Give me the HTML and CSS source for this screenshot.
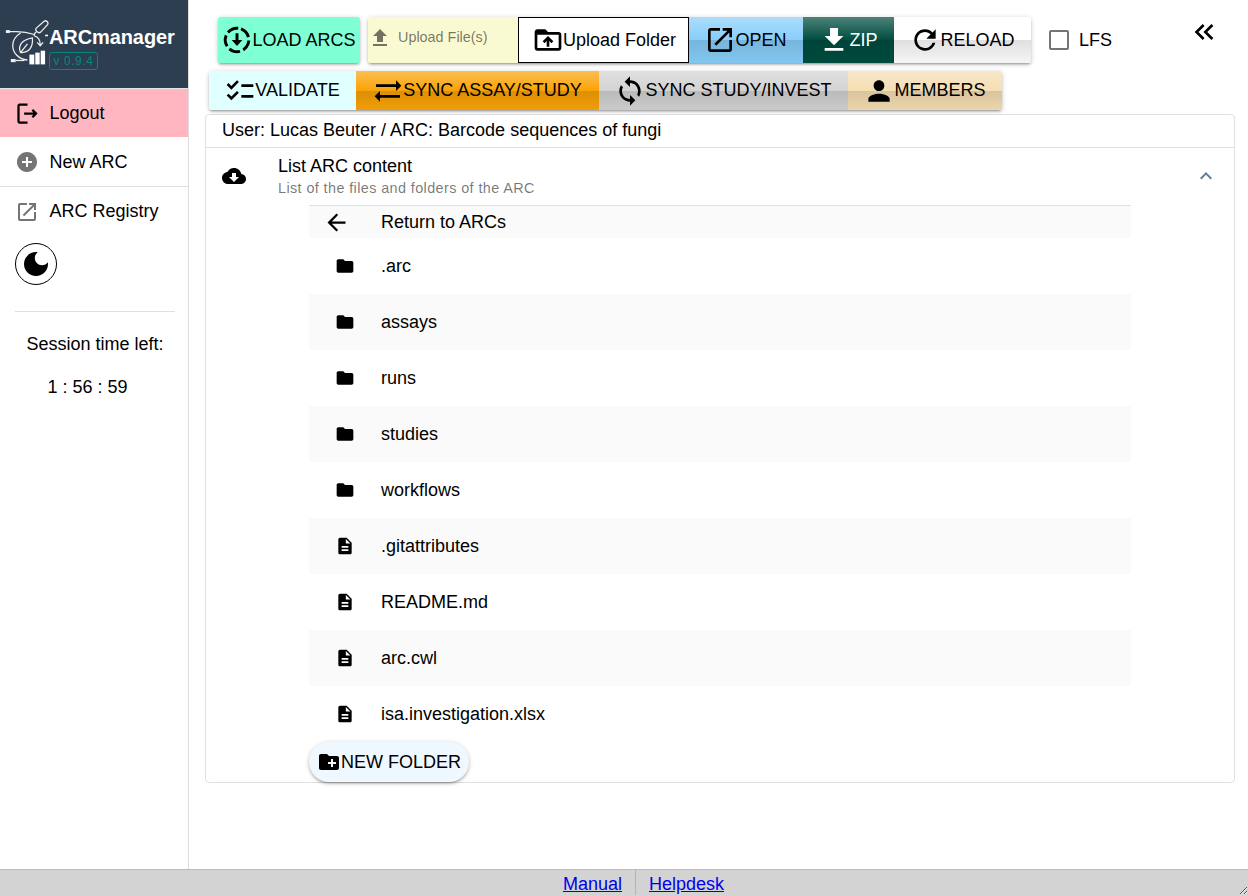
FILE: index.html
```html
<!DOCTYPE html>
<html>
<head>
    <meta charset="utf-8">
    <title>ARCmanager</title>
    <link rel="stylesheet" href="styles.css">
</head>
<body>
    <svg class="defs" width="0" height="0">
        <symbol id="i-folder" viewBox="0 0 24 24"><path d="M10 4H4c-1.1 0-1.99.9-1.99 2L2 18c0 1.1.9 2 2 2h16c1.1 0 2-.9 2-2V8c0-1.1-.9-2-2-2h-8l-2-2z"/></symbol>
        <symbol id="i-file" viewBox="0 0 24 24"><path d="M14 2H6c-1.1 0-1.99.9-1.99 2L4 20c0 1.1.89 2 1.99 2H18c1.1 0 2-.9 2-2V8l-6-6zm2 16H8v-2h8v2zm0-4H8v-2h8v2zm-3-5V3.5L18.5 9H13z"/></symbol>
    </svg>
    <div class="layout">
        <aside class="sidebar">
            <div class="brand">
                <svg class="brand-logo" viewBox="0 0 50 70" stroke="#eee" stroke-width="1.3">
                    <path d="M9 31.500h8c6 0 12 1 18 3"/>
                    <rect x="6" y="30" width="4" height="3" fill="#eee" stroke="none"/>
                    <path d="M21 33c-5 3-8 8-8 13c0 7 6 14 15 14.500"/>
                    <path d="M16 61h9"/>
                    <rect x="11" y="59.500" width="5" height="3.200" fill="#eee" stroke="none"/>
                    <path d="M21 53c-3-7 1-13 12-15c1 9-3 15-12 15zM21 53l7-9"/>
                    <path d="M37 28l8-7c2-1.500 5 1 3.500 3.500l-7 7.500c-2 2-6.500-1.500-4.500-4zM37 32c-2 1-2.500 2-2 4"/>
                    <path d="M35 36c4 1 6 4 6 9M38 42.500l3 3.500l3-3.500"/>
                    <rect x="30" y="55" width="5" height="10" fill="#fff" stroke="none"/>
                    <rect x="36" y="53" width="4.500" height="12" fill="#fff" stroke="none"/>
                    <rect x="41.500" y="51" width="4.500" height="14" fill="#fff" stroke="none"/>
                    <path d="M46 35.500h3" stroke="#fff" stroke-width="1.600"/>
                </svg>
                <div class="brand-text">
                    <div class="brand-title">ARCmanager</div>
                    <div class="brand-version">v 0.9.4</div>
                </div>
            </div>
            <a class="side-item side-logout">
                <span class="side-icon"><svg class="icon-27" viewBox="0 0 24 24"><path d="M17 8l-1.410 1.410L17.170 11H9v2h8.170l-1.580 1.580L17 16l4-4zM5 5h7V3H5c-1.100 0-2 .9-2 2v14c0 1.100.9 2 2 2h7v-2H5z"/></svg></span>
                Logout
            </a>
            <a class="side-item">
                <span class="side-icon grey"><svg class="icon-24" viewBox="0 0 24 24"><path d="M12 2C6.480 2 2 6.480 2 12s4.480 10 10 10 10-4.480 10-10S17.520 2 12 2zm5 11h-4v4h-2v-4H7v-2h4V7h2v4h4v2z"/></svg></span>
                New ARC
            </a>
            <a class="side-item side-last">
                <span class="side-icon grey"><svg class="icon-24" viewBox="0 0 24 24"><path d="M19 19H5V5h7V3H5c-1.110 0-2 .9-2 2v14c0 1.100.89 2 2 2h14c1.100 0 2-.9 2-2v-7h-2v7zM14 3v2h3.590l-9.830 9.830 1.410 1.410L19 6.410V10h2V3h-7z"/></svg></span>
                ARC Registry
            </a>
            <button class="theme-btn"><svg class="icon-32" viewBox="0 0 24 24"><path d="M12 3c-4.970 0-9 4.030-9 9s4.030 9 9 9 9-4.030 9-9c0-.46-.04-.92-.1-1.360-.98 1.370-2.580 2.260-4.400 2.260-2.980 0-5.400-2.420-5.400-5.400 0-1.810.89-3.420 2.260-4.400-.44-.06-.9-.1-1.360-.1z"/></svg></button>
            <hr class="side-line">
            <div class="session">Session time left:</div>
            <div class="session-time">1 : 56 : 59</div>
        </aside>

        <main class="main">
            <div class="toolbar toolbar-top">
                <button class="btn w-load solo"><svg class="icon-32" viewBox="0 0 24 24"><circle cx="12" cy="12" r="8.800" fill="none" stroke="#000" stroke-width="2.200" stroke-dasharray="8.500 2.560" transform="rotate(-70 12 12)"/><path d="M13.100 7h-2.200v5H8l4 4.500 4-4.500h-2.900z"/></svg>LOAD ARCS</button>
                <div class="upload">
                    <label class="upload-file"><svg class="icon-24" viewBox="0 0 24 24"><path d="M9 16h6v-6h4l-7-7-7 7h4zm-4 2h14v2H5z"/></svg><span>Upload File(s)</span></label>
                    <button class="btn w-folder plain"><svg class="icon-32" viewBox="0 0 24 24"><path d="M20 6h-8l-2-2H4c-1.110 0-1.990.89-1.990 2L2 18c0 1.110.89 2 2 2h16c1.110 0 2-.89 2-2V8c0-1.110-.89-2-2-2zm0 12H4V8h16v10zM8 13.010l1.410 1.410L11 12.840V17h2v-4.160l1.590 1.590L16 13.010 12.010 9 8 13.010z"/></svg>Upload Folder</button>
                    <button class="btn w-open glossy blue"><svg class="icon-32" viewBox="0 0 24 24"><path d="M19 19H5V5h7V3H5c-1.110 0-2 .9-2 2v14c0 1.100.89 2 2 2h14c1.100 0 2-.9 2-2v-7h-2v7zM14 3v2h3.590l-9.830 9.830 1.410 1.410L19 6.410V10h2V3h-7z"/></svg>OPEN</button>
                    <button class="btn w-zip glossy green"><svg class="icon-32" viewBox="0 0 24 24"><path d="M19 9h-4V3H9v6H5l7 7 7-7zM5 18v2h14v-2H5z"/></svg>ZIP</button>
                    <button class="btn w-reload glossy white"><svg class="icon-32" viewBox="0 0 24 24"><path d="M17.650 6.350C16.200 4.900 14.210 4 12 4c-4.420 0-7.990 3.580-7.990 8s3.570 8 7.990 8c3.730 0 6.840-2.550 7.730-6h-2.080c-.82 2.330-3.040 4-5.650 4-3.310 0-6-2.690-6-6s2.690-6 6-6c1.660 0 3.140.69 4.220 1.780L13 11h7V4l-2.350 2.350z"/></svg>RELOAD</button>
                </div>
                <label class="lfs"><span class="checkbox"></span>LFS</label>
                <svg class="collapse icon-32" viewBox="0 0 24 24"><path d="M17.590 18 19 16.590 14.420 12 19 7.410 17.590 6l-6 6zM11 18l1.410-1.410L7.830 12l4.580-4.590L11 6l-6 6z"/></svg>
            </div>

            <div class="toolbar toolbar-second">
                <div class="group">
                    <button class="btn w-validate cyan"><svg class="icon-32" viewBox="0 0 24 24"><path d="M22 7h-9v2h9V7zm0 8h-9v2h9v-2zM5.540 11 2 7.460l1.410-1.410 2.120 2.120 4.240-4.240 1.410 1.410L5.540 11zm0 8L2 15.460l1.410-1.410 2.120 2.120 4.240-4.240 1.410 1.410L5.540 19z"/></svg>VALIDATE</button>
                    <button class="btn w-assay glossy orange"><svg class="icon-32" viewBox="0 0 24 24"><path d="M22 8l-4-4v3H3v2h15v3l4-4zM2 16l4 4v-3h15v-2H6v-3l-4 4z"/></svg>SYNC ASSAY/STUDY</button>
                    <button class="btn w-study glossy grey-btn"><svg class="icon-32" viewBox="0 0 24 24"><path d="M12 4V1L8 5l4 4V6c3.310 0 6 2.690 6 6 0 1.010-.25 1.970-.7 2.800l1.460 1.460C19.540 15.030 20 13.570 20 12c0-4.420-3.580-8-8-8zm0 14c-3.310 0-6-2.690-6-6 0-1.010.25-1.970.7-2.800L5.240 7.740C4.460 8.970 4 10.430 4 12c0 4.420 3.580 8 8 8v3l4-4-4-4v3z"/></svg>SYNC STUDY/INVEST</button>
                    <button class="btn w-members glossy wheat"><svg class="icon-32" viewBox="0 0 24 24"><path d="M12 12c2.210 0 4-1.790 4-4s-1.790-4-4-4-4 1.790-4 4 1.790 4 4 4zm0 2c-2.670 0-8 1.340-8 4v2h16v-2c0-2.660-5.330-4-8-4z"/></svg>MEMBERS</button>
                </div>
            </div>

            <section class="card">
                <div class="card-user">User: Lucas Beuter / ARC: Barcode sequences of fungi</div>
                <div class="expansion">
                    <svg class="expansion-icon icon-24" viewBox="0 0 24 24"><path d="M19.350 10.040C18.670 6.590 15.640 4 12 4 9.110 4 6.600 5.640 5.350 8.040 2.340 8.360 0 10.910 0 14c0 3.310 2.690 6 6 6h13c2.760 0 5-2.240 5-5 0-2.640-2.050-4.780-4.650-4.960zM17 13l-5 5-5-5h3V9h4v4h3z"/></svg>
                    <div class="expansion-text">
                        <div class="expansion-title">List ARC content</div>
                        <div class="expansion-caption">List of the files and folders of the ARC</div>
                    </div>
                    <svg class="expansion-toggle icon-24" viewBox="0 0 24 24"><path d="M12 8l-6 6 1.410 1.410L12 10.830l4.590 4.580L18 14z"/></svg>
                </div>
                <ul class="files">
                    <li class="file-back"><span class="file-icon"><svg class="icon-27" viewBox="0 0 24 24"><path d="M20 11H7.830l5.590-5.590L12 4l-8 8 8 8 1.410-1.410L7.830 13H20v-2z"/></svg></span>Return to ARCs</li>
                    <li><span class="file-icon"><svg class="icon-20"><use href="#i-folder"/></svg></span>.arc</li>
                    <li><span class="file-icon"><svg class="icon-20"><use href="#i-folder"/></svg></span>assays</li>
                    <li><span class="file-icon"><svg class="icon-20"><use href="#i-folder"/></svg></span>runs</li>
                    <li><span class="file-icon"><svg class="icon-20"><use href="#i-folder"/></svg></span>studies</li>
                    <li><span class="file-icon"><svg class="icon-20"><use href="#i-folder"/></svg></span>workflows</li>
                    <li><span class="file-icon"><svg class="icon-20"><use href="#i-file"/></svg></span>.gitattributes</li>
                    <li><span class="file-icon"><svg class="icon-20"><use href="#i-file"/></svg></span>README.md</li>
                    <li><span class="file-icon"><svg class="icon-20"><use href="#i-file"/></svg></span>arc.cwl</li>
                    <li><span class="file-icon"><svg class="icon-20"><use href="#i-file"/></svg></span>isa.investigation.xlsx</li>
                </ul>
                <button class="btn new-folder"><svg class="icon-24" viewBox="0 0 24 24"><path d="M20 6h-8l-2-2H4c-1.110 0-1.990.89-1.990 2L2 18c0 1.110.89 2 2 2h16c1.110 0 2-.89 2-2V8c0-1.110-.89-2-2-2zm-1 8h-3v3h-2v-3h-3v-2h3V9h2v3h3v2z"/></svg>NEW FOLDER</button>
            </section>
        </main>
    </div>
    <footer class="footer">
        <a href="#">Manual</a>
        <a href="#" class="footer-second">Helpdesk</a>
    </footer>
</body>
</html>
```

FILE: styles.css
```css
* {
    margin: 0;
    padding: 0;
    box-sizing: border-box;
    list-style: none;
}
html, body {
    height: 100%;
}
body {
    display: flex;
    flex-direction: column;
    overflow: hidden;
    background: #fff;
    color: #000;
    font-family: "Liberation Sans", Arial, sans-serif;
    font-size: 18px;
}
.defs {
    position: absolute;
}
svg {
    flex: none;
    display: block;
    fill: currentColor;
}
.icon-20 { width: 20px; height: 20px; }
.icon-24 { width: 24px; height: 24px; }
.icon-27 { width: 27px; height: 27px; }
.icon-32 { width: 32px; height: 32px; }

.layout {
    flex: 1;
    display: flex;
    min-height: 0;
}

/* sidebar */
.sidebar {
    width: 189px;
    flex: none;
    border-right: 1px solid #ddd;
}
.brand {
    display: flex;
    height: 89px;
    background: #2c3e50;
    border-bottom: 1px solid #e4e4e4;
}
.brand-logo {
    width: 49px;
    height: 70px;
    fill: none;
}
.brand-title {
    margin-top: 26px;
    color: #fff;
    font-size: 20px;
    font-weight: bold;
    line-height: 23px;
    letter-spacing: -.1px;
}
.brand-version {
    width: 49px;
    height: 18px;
    margin-top: 3px;
    border: 1px solid #00897b;
    border-radius: 3px;
    color: #00897b;
    font-size: 12px;
    letter-spacing: .6px;
    line-height: 16px;
    text-align: center;
}
.side-item {
    display: flex;
    align-items: center;
    gap: 10.5px;
    height: 49px;
    padding-left: 15px;
    border-bottom: 1px solid #e0e0e0;
}
.side-logout {
    background: #ffb6c1;
    border-bottom-color: #fff;
}
.side-last {
    border-bottom: 0;
}
.side-icon {
    width: 24px;
    height: 24px;
    display: flex;
    align-items: center;
    justify-content: center;
}
.grey {
    color: #757575;
}
.theme-btn {
    display: flex;
    align-items: center;
    justify-content: center;
    width: 42px;
    height: 42px;
    margin: 7px 0 0 15px;
    border: 1px solid #000;
    border-radius: 50%;
    background: #fff;
}
.side-line {
    width: 160px;
    height: 1px;
    margin: 26px 0 0 15px;
    border: 0;
    background: #e0e0e0;
}
.session {
    width: 160px;
    margin: 22px 0 0 15px;
    line-height: 21px;
    text-align: center;
}
.session-time {
    width: 145px;
    margin: 22px 0 0 15px;
    line-height: 21px;
    text-align: center;
}

/* toolbar */
.main {
    flex: 1;
    min-width: 0;
}
.toolbar {
    display: flex;
    align-items: flex-start;
}
.toolbar-top {
    padding: 17px 0 0 29px;
}
.toolbar-second {
    padding: 8px 0 0 20px;
}
.btn {
    display: flex;
    align-items: center;
    justify-content: center;
    height: 46px;
    padding-right: 1px;
    border: 0;
    color: #000;
    font-family: inherit;
    font-size: 18px;
    white-space: nowrap;
}
.btn svg {
    margin-right: -1px;
}
.solo {
    border-radius: 3px;
    box-shadow: 0 1px 5px rgba(0,0,0,.2), 0 2px 2px rgba(0,0,0,.14), 0 3px 1px -2px rgba(0,0,0,.12);
}
.upload, .group {
    display: flex;
    border-radius: 3px;
    box-shadow: 0 1px 5px rgba(0,0,0,.2), 0 2px 2px rgba(0,0,0,.14), 0 3px 1px -2px rgba(0,0,0,.12);
}
.upload {
    margin-left: 8px;
}
.group .btn {
    height: 39px;
}
.group .btn:first-child {
    border-radius: 3px 0 0 3px;
}
.group .btn:last-child, .upload .btn:last-child {
    border-radius: 0 3px 3px 0;
}
.glossy {
    background-image: linear-gradient(to bottom, rgba(255,255,255,.3), rgba(255,255,255,0) 50%, rgba(0,0,0,.12) 51%, rgba(0,0,0,.04));
}
.w-load { width: 142px; background-color: #7fffd4; }
.w-folder { width: 171px; }
.w-open { width: 114px; }
.w-zip { width: 91px; }
.w-reload { width: 137px; }
.w-validate { width: 147px; }
.w-assay { width: 243px; }
.w-study { width: 249px; }
.w-members { width: 154px; }
.plain { padding: 0 0 0 1px; background: #fff; border: 1px solid #000; }
.blue { background-color: #87cefa; }
.green { background-color: #004d40; color: #fff; }
.white { background-color: #fff; }
.cyan { background-color: #e0ffff; }
.orange { background-color: #faa307; }
.grey-btn { background-color: #d3d3d3; }
.wheat { background-color: #f5deb3; }
.upload-file {
    display: flex;
    align-items: flex-start;
    width: 150px;
    height: 46px;
    padding-top: 9px;
    border-radius: 3px 0 0 3px;
    background: #fafad2;
    color: rgba(0,0,0,.54);
    font-size: 14.4px;
}
.upload-file span {
    margin: 3px 0 0 6px;
    line-height: 16px;
}
.lfs {
    display: flex;
    align-items: center;
    gap: 10px;
    height: 46px;
    margin-left: 18px;
}
.checkbox {
    width: 20px;
    height: 20px;
    border: 2px solid #757575;
    border-radius: 2px;
}
.collapse {
    margin: -1px 0 0 76px;
}

/* card */
.card {
    height: 669px;
    margin: 4px 13px 0 16px;
    border: 1px solid #e0e0e0;
    border-radius: 4px;
}
.card-user {
    height: 33px;
    padding-left: 16px;
    border-bottom: 1px solid #e0e0e0;
    line-height: 30px;
}
.expansion {
    display: flex;
    height: 57px;
    padding-left: 16px;
}
.expansion-icon {
    margin-top: 16px;
}
.expansion-text {
    flex: 1;
    margin-left: 32px;
}
.expansion-title {
    margin-top: 8px;
    line-height: 21px;
}
.expansion-caption {
    margin-top: 3px;
    color: rgba(0,0,0,.54);
    font-size: 14.4px;
    letter-spacing: .4px;
    line-height: 16px;
}
.expansion-toggle {
    margin: 16px 16px 0 0;
    color: #5f7d95;
}
.files {
    width: 822px;
    margin-left: 103px;
}
.files li {
    display: flex;
    align-items: center;
    height: 56px;
}
.files li:nth-child(odd) {
    background: #fafafa;
}
.files li.file-back {
    height: 33px;
    border-top: 1px solid #e0e0e0;
}
.file-icon {
    display: flex;
    align-items: center;
    justify-content: center;
    width: 72px;
}
.file-back .file-icon {
    justify-content: flex-start;
    padding-left: 14px;
}
.new-folder {
    width: 160px;
    height: 40px;
    margin-left: 103px;
    padding-right: 0;
    border-radius: 20px;
    background: #f0f8ff;
    box-shadow: 0 1px 5px rgba(0,0,0,.2), 0 2px 2px rgba(0,0,0,.14), 0 3px 1px -2px rgba(0,0,0,.12);
}
.new-folder svg {
    margin-right: 0;
}

/* footer */
.footer {
    display: flex;
    flex: none;
    justify-content: center;
    height: 26px;
    padding-left: 39px;
    overflow: hidden;
    resize: both;
    border-top: 1px solid #bbb;
    background: #d3d3d3;
    line-height: 29px;
}
.footer a {
    color: #00e;
    padding: 0 13px;
}
.footer-second {
    border-left: 1px solid #b5b5b5;
}
```
